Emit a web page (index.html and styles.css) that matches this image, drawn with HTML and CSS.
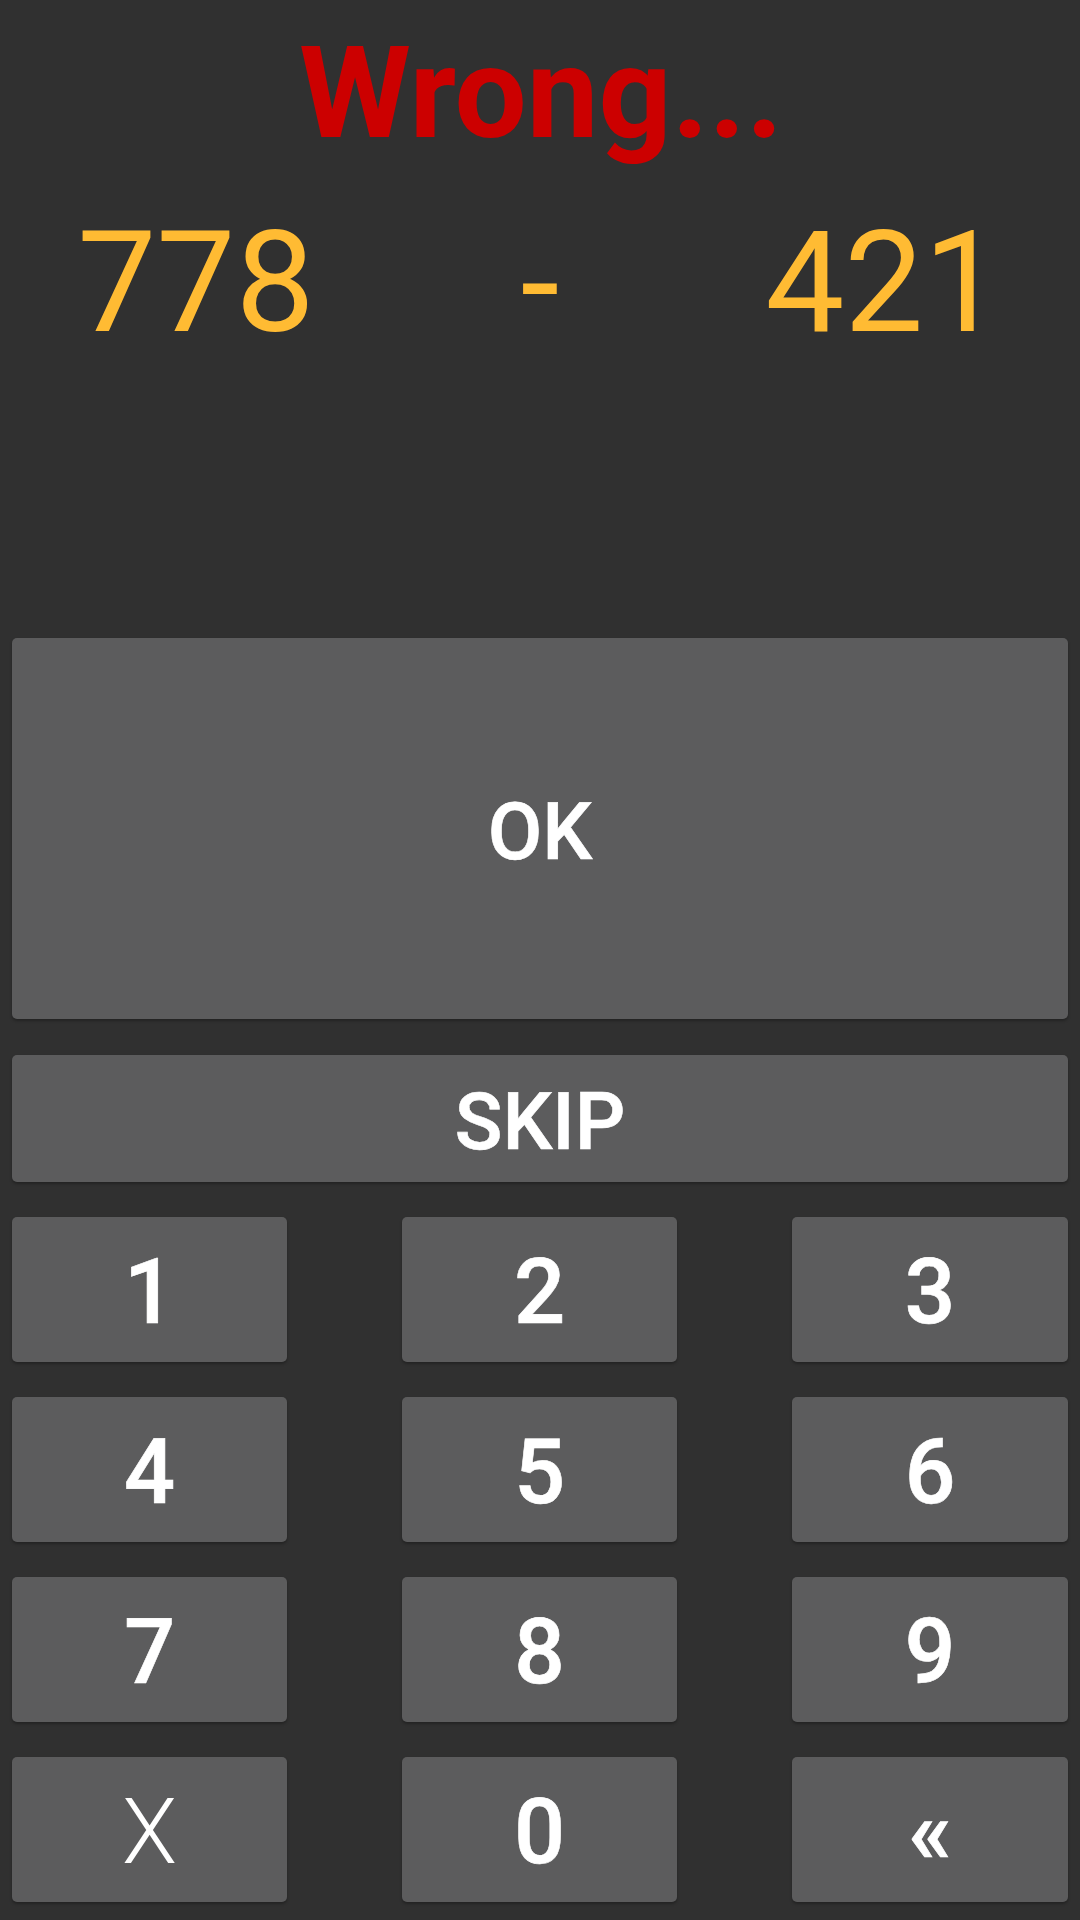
FILE: index.html
```html
<!DOCTYPE html>
<html lang="en">
<head>
<meta charset="utf-8">
<title>Wrong...</title>
<link rel="stylesheet" href="styles.css">
</head>
<body>
<div class="screen">
  <h1 class="status">Wrong...</h1>
  <div class="problem">
    <span class="operand">778</span>
    <span class="operator">-</span>
    <span class="operand">421</span>
  </div>
  <div class="actions">
    <button class="btn btn-ok">OK</button>
    <button class="btn btn-skip">SKIP</button>
  </div>
  <div class="keypad">
    <button class="btn key">1</button>
    <button class="btn key">2</button>
    <button class="btn key">3</button>
    <button class="btn key">4</button>
    <button class="btn key">5</button>
    <button class="btn key">6</button>
    <button class="btn key">7</button>
    <button class="btn key">8</button>
    <button class="btn key">9</button>
    <button class="btn key key-clear">X</button>
    <button class="btn key">0</button>
    <button class="btn key">«</button>
  </div>
</div>
</body>
</html>
```

FILE: styles.css
```css
* {
  box-sizing: border-box;
}

html, body {
  margin: 0;
  padding: 0;
  background: #303030;
}

body {
  width: 1080px;
  height: 1920px;
  overflow: hidden;
  font-family: Roboto, "Liberation Sans", sans-serif;
}

.screen {
  display: flex;
  flex-direction: column;
  padding: 18px 12px 0;
}

.status {
  margin: 0;
  font-size: 128px;
  line-height: 150px;
  height: 150px;
  font-weight: 700;
  color: #cc0000;
  text-align: center;
  padding-left: 2px;
}

.problem {
  display: grid;
  grid-template-columns: repeat(3, 1fr);
  margin: 33px 12px 0;
  height: 164px;
  font-size: 141px;
  line-height: 164px;
  color: #ffbb33;
  text-align: center;
}

.operand,
.operator {
  display: block;
}

.actions {
  display: flex;
  flex-direction: column;
  gap: 36px;
  margin-top: 273px;
}

.btn {
  display: flex;
  align-items: center;
  justify-content: center;
  border: none;
  margin: 0;
  padding: 6px 0 0;
  background: #5c5c5d;
  color: #ffffff;
  border-radius: 5px;
  font-family: "Roboto Medium", Roboto, "Liberation Sans", sans-serif;
  font-weight: 500;
  -webkit-text-stroke: 0.6px #ffffff;
  box-shadow: 0 2px 3px rgba(0, 0, 0, 0.28);
}

.btn-ok {
  height: 381px;
  font-size: 79px;
}

.btn-skip {
  height: 127px;
  font-size: 79px;
  padding-top: 7px;
}

.keypad {
  display: grid;
  grid-template-columns: 275px 275px 276px;
  justify-content: space-between;
  grid-auto-rows: 145px;
  row-gap: 35px;
  margin-top: 35px;
}

.key {
  font-size: 90px;
}

.key-clear {
  font-family: Roboto, "Liberation Sans", sans-serif;
  font-weight: 300;
  -webkit-text-stroke: 0;
}
```
